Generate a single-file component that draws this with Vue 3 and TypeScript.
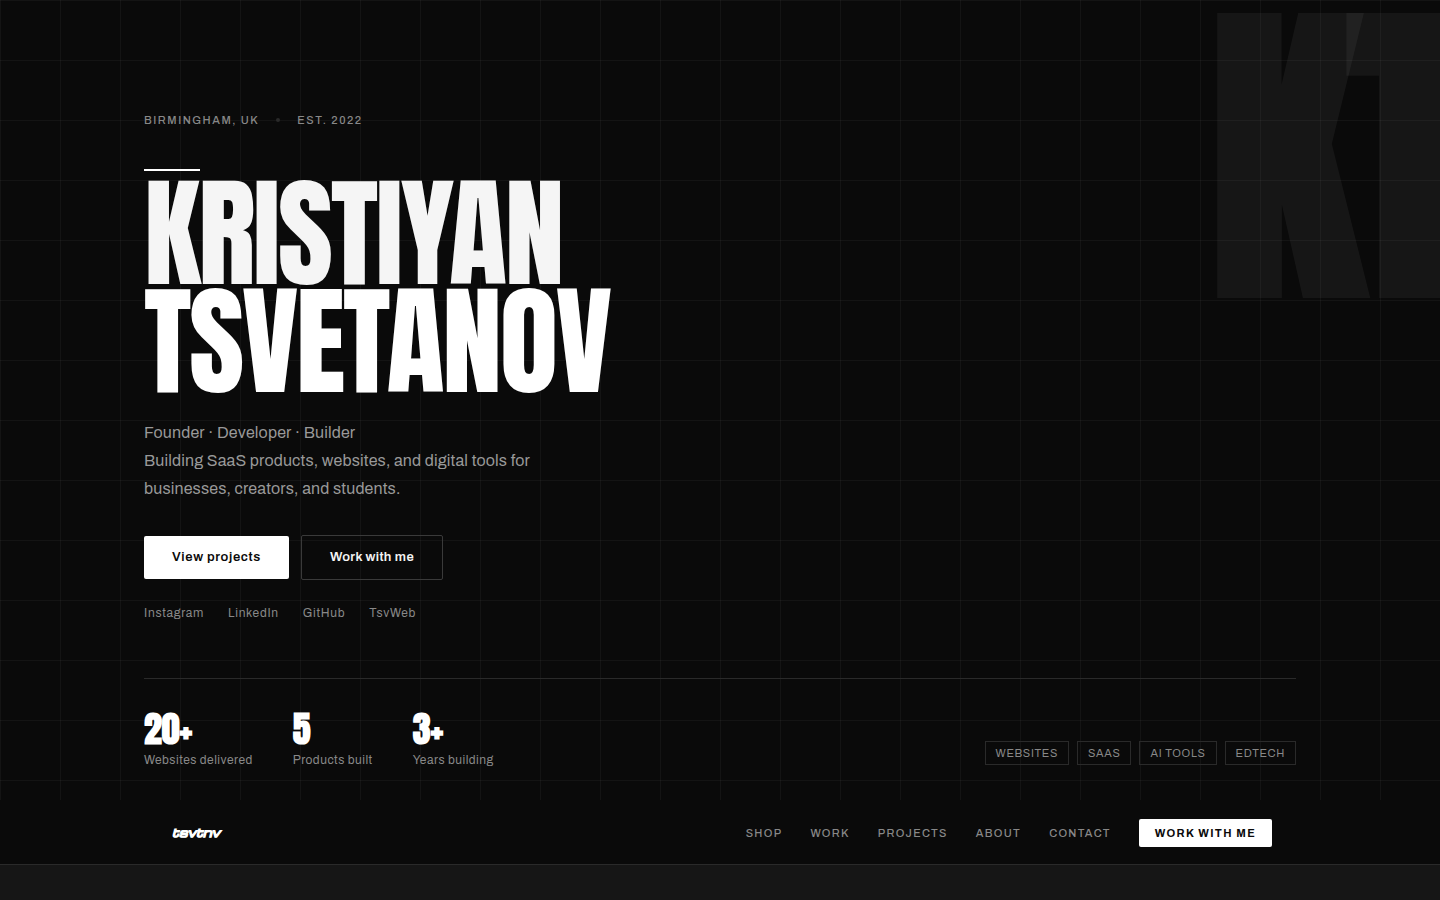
<script setup lang="ts">
interface Stat { value: string; label: string }

const socials: string[] = ['Instagram', 'LinkedIn', 'GitHub', 'TsvWeb']
const stats: Stat[] = [
  { value: '20+', label: 'Websites delivered' },
  { value: '5', label: 'Products built' },
  { value: '3+', label: 'Years building' },
]
const tags: string[] = ['Websites', 'SaaS', 'AI Tools', 'EdTech']
const navLinks: string[] = ['Shop', 'Work', 'Projects', 'About', 'Contact']
</script>

<template>
  <div class="page">
    <header class="hero">
      <div class="watermark" aria-hidden="true"><span>K</span><span>T</span></div>
      <div class="grid-lines" aria-hidden="true"></div>
      <div class="container">
        <p class="meta"><span>Birmingham, UK</span><i class="dot"></i><span>Est. 2022</span></p>
        <div class="rule"></div>
        <h1><span class="first">Kristiyan</span><span>Tsvetanov</span></h1>
        <p class="lead">
          Founder · Developer · Builder<br />
          Building SaaS products, websites, and digital tools for businesses, creators, and students.
        </p>
        <div class="actions">
          <button type="button" class="btn solid">View projects</button>
          <button type="button" class="btn outline">Work with me</button>
        </div>
        <div class="socials">
          <a v-for="s in socials" :key="s" href="#">{{ s }}</a>
        </div>
        <div class="bottom">
          <dl class="stats">
            <div v-for="s in stats" :key="s.label" class="stat">
              <dt>{{ s.label }}</dt>
              <dd>{{ s.value }}</dd>
            </div>
          </dl>
          <ul class="tags">
            <li v-for="t in tags" :key="t">{{ t }}</li>
          </ul>
        </div>
      </div>
    </header>
    <nav class="nav">
      <div class="nav-inner">
        <a href="#" class="logo">tsvtnv</a>
        <div class="links">
          <a v-for="n in navLinks" :key="n" href="#">{{ n }}</a>
          <button type="button" class="cta">Work with me</button>
        </div>
      </div>
    </nav>
    <section class="next"></section>
  </div>
</template>

<style>
body {
  margin: 0;
  background: #0a0a0a;
}
</style>

<style scoped>
.page {
  display: flex;
  flex-direction: column;
  min-height: 100vh;
  overflow: hidden;
  background: #0a0a0a;
  color: #fff;
  font-family: Archivo, "Liberation Sans", Arial, sans-serif;
}
.hero {
  position: relative;
  overflow: hidden;
}
.grid-lines {
  position: absolute;
  inset: 0;
  background-image:
    linear-gradient(rgba(255, 255, 255, 0.04) 1px, transparent 1px),
    linear-gradient(90deg, rgba(255, 255, 255, 0.04) 1px, transparent 1px);
  background-size: 60px 60px;
}
.watermark {
  position: absolute;
  top: 0;
  left: calc(100% - 230px);
  display: flex;
  font-family: Anton, Impact, "Liberation Sans Narrow", sans-serif;
  font-size: 320px;
  line-height: 316px;
  font-weight: 700;
  letter-spacing: -0.04em;
  color: rgba(255, 255, 255, 0.05);
}
.container {
  position: relative;
  max-width: 1152px;
  margin: 0 auto;
  padding: 112px 24px 35px;
}
.meta {
  display: flex;
  align-items: center;
  gap: 17px;
  margin: 0;
  font-size: 11px;
  font-weight: 500;
  line-height: 16px;
  letter-spacing: 0.14em;
  text-transform: uppercase;
  color: #888;
}
.dot {
  width: 4px;
  height: 4px;
  border-radius: 50%;
  background: #2a2a2a;
}
.rule {
  width: 56px;
  height: 2px;
  margin-top: 41px;
  background: #fff;
}
h1 {
  margin: 8px 0 0;
  font-family: Anton, Impact, "Liberation Sans Narrow", sans-serif;
  font-size: 120px;
  font-weight: 400;
  line-height: 108px;
  letter-spacing: -0.02em;
  text-transform: uppercase;
}
h1 span {
  display: block;
}
.first {
  color: #f5f5f5;
}
.lead {
  max-width: 420px;
  margin: 24px 0 0;
  font-size: 16px;
  line-height: 28px;
  letter-spacing: 0.01em;
  color: #999;
}
.actions {
  display: flex;
  align-items: center;
  gap: 12px;
  margin-top: 32px;
}
.btn {
  padding: 14px 28px;
  border: 0;
  border-radius: 2px;
  font: 600 13px/15px Archivo, "Liberation Sans", Arial, sans-serif;
}
.solid {
  background: #fff;
  color: #0a0a0a;
  letter-spacing: 0.05em;
}
.outline {
  border: 1px solid #3a3a3a;
  background: transparent;
  color: #f5f5f5;
  letter-spacing: 0.03em;
}
.socials {
  display: flex;
  gap: 24px;
  margin-top: 24px;
  font-size: 12px;
  line-height: 18px;
  letter-spacing: 0.06em;
}
.socials a {
  color: #888;
  text-decoration: none;
}
.bottom {
  display: flex;
  align-items: flex-end;
  justify-content: space-between;
  margin-top: 56px;
  padding-top: 32px;
  border-top: 1px solid #2a2a2a;
}
.stats {
  display: flex;
  gap: 40px;
  margin: 0;
}
.stat {
  display: flex;
  flex-direction: column-reverse;
  gap: 8px;
}
.stat dd {
  margin: 0;
  font-family: Anton, Impact, "Liberation Sans Narrow", sans-serif;
  font-size: 36px;
  font-weight: 700;
  line-height: 36px;
}
.stat dt {
  font-size: 12px;
  line-height: 10px;
  letter-spacing: 0.04em;
  color: #888;
}
.tags {
  display: flex;
  gap: 8px;
  margin: 0;
  padding: 0;
  list-style: none;
}
.tags li {
  padding: 4px 10px;
  border: 1px solid #2a2a2a;
  font-size: 11px;
  line-height: 14px;
  letter-spacing: 0.06em;
  text-transform: uppercase;
  color: #888;
}
.nav {
  border-bottom: 1px solid #2a2a2a;
}
.nav-inner {
  box-sizing: border-box;
  display: flex;
  align-items: center;
  justify-content: space-between;
  max-width: 1152px;
  height: 64px;
  margin: 0 auto;
  padding: 2px 24px 0;
}
.logo {
  padding: 0 0 2px 4px;
  color: #fff;
  font: italic 700 11px/16px Michroma, "Krona One", "DejaVu Sans", sans-serif;
  -webkit-text-stroke: 1px #fff;
  text-decoration: none;
}
.links {
  display: flex;
  align-items: center;
  gap: 28px;
  font-size: 11px;
  font-weight: 500;
  letter-spacing: 0.12em;
  text-transform: uppercase;
}
.links a {
  color: #888;
  text-decoration: none;
}
.cta {
  padding: 7px 16px;
  border: 0;
  border-radius: 2px;
  background: #fff;
  color: #0a0a0a;
  font: 700 11px/14px Archivo, "Liberation Sans", Arial, sans-serif;
  letter-spacing: 0.12em;
  text-transform: uppercase;
}
.next {
  flex: 1;
  background: #161616;
}
</style>
